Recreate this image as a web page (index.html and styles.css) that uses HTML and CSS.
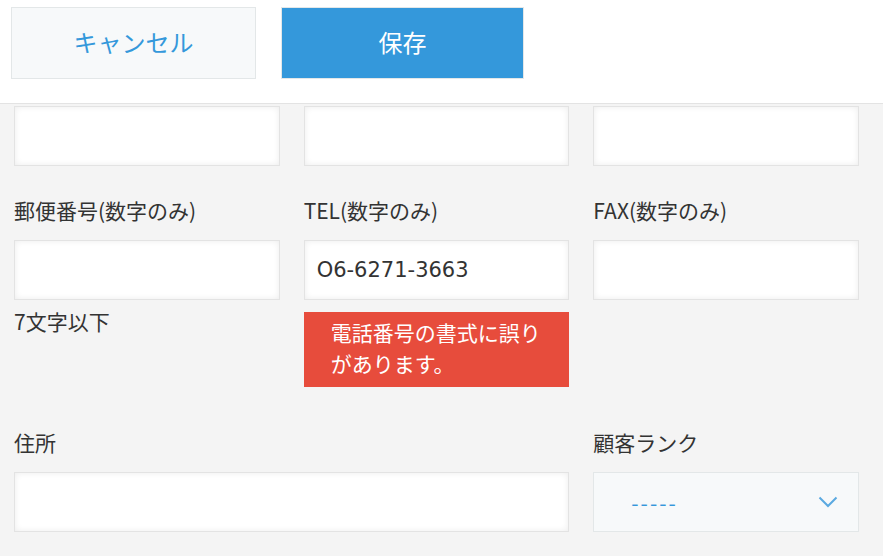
FILE: index.html
```html
<!DOCTYPE html>
<html lang="ja">
<head>
    <meta charset="UTF-8">
    <title>顧客情報の編集</title>
    <link rel="stylesheet" href="styles.css">
</head>
<body>
    <div class="toolbar">
        <button class="btn cancel">キャンセル</button>
        <button class="btn save">保存</button>
    </div>
    <div class="record">
        <div class="row first">
            <div class="field"><div class="input"></div></div>
            <div class="field"><div class="input"></div></div>
            <div class="field"><div class="input"></div></div>
        </div>
        <div class="row">
            <div class="field">
                <div class="label">郵便番号(数字のみ)</div>
                <div class="input"></div>
                <div class="note">7文字以下</div>
            </div>
            <div class="field">
                <div class="label">TEL(数字のみ)</div>
                <div class="input">O6-6271-3663</div>
                <div class="error">電話番号の書式に誤りがあります。</div>
            </div>
            <div class="field">
                <div class="label">FAX(数字のみ)</div>
                <div class="input"></div>
            </div>
        </div>
        <div class="row last">
            <div class="field wide">
                <div class="label">住所</div>
                <div class="input"></div>
            </div>
            <div class="field">
                <div class="label">顧客ランク</div>
                <div class="select">
                    <span class="dashes">-----</span>
                    <svg class="chevron" width="20" height="12" viewBox="0 0 20 12">
                        <polyline points="1.5,1.5 10,10 18.5,1.5" fill="none" stroke="#5ba9e0" stroke-width="2"/>
                    </svg>
                </div>
            </div>
        </div>
    </div>
</body>
</html>
```

FILE: styles.css
```css
* {
    box-sizing: border-box;
}
body {
    margin: 0;
    background-color: #f4f4f4;
    color: #333;
    font-family: "Noto Sans CJK JP", "Noto Sans", sans-serif;
    font-size: 21px;
}
.toolbar {
    background-color: #fff;
    height: 104px;
    border-bottom: 1px solid #e3e3e3;
    padding: 7px 0 0 11px;
    display: flex;
    gap: 25px;
}
.btn {
    width: 245px;
    height: 72px;
    padding-bottom: 4px;
    font-family: inherit;
    font-size: 24px;
    border: 1px solid #e3e7e8;
    cursor: pointer;
}
.cancel {
    background-color: #f7f9fa;
    color: #3498db;
}
.save {
    width: 243px;
    background-color: #3498db;
    border-color: #e3e7e8;
    color: #fff;
}
.record {
    padding: 0 24px 0 14px;
}
.row {
    display: grid;
    grid-template-columns: repeat(3, 1fr);
    gap: 24px;
    margin-top: 30px;
}
.row.first {
    margin-top: 2px;
}
.row.last {
    margin-top: 41px;
}
.wide {
    grid-column: span 2;
}
.label {
    line-height: 28px;
    margin-bottom: 16px;
}
.input {
    height: 60px;
    background-color: #fff;
    border: 1px solid #e3e3e3;
    box-shadow: inset 0 0 6px rgba(0, 0, 0, 0.08);
    padding: 0 12px;
    line-height: 58px;
    font-family: "DejaVu Sans", "Noto Sans CJK JP", sans-serif;
}
.note {
    margin-top: 11px;
    line-height: 20px;
}
.error {
    margin-top: 12px;
    background-color: #e74c3c;
    color: #fff;
    padding: 5px 22px 8px 27px;
    line-height: 31px;
}
.select {
    height: 60px;
    background-color: #f7f9fa;
    border: 1px solid #e3e7e8;
    display: flex;
    align-items: center;
    justify-content: space-between;
    padding: 0 20px 0 37px;
}
.dashes {
    color: #3498db;
    letter-spacing: 2px;
}
```
